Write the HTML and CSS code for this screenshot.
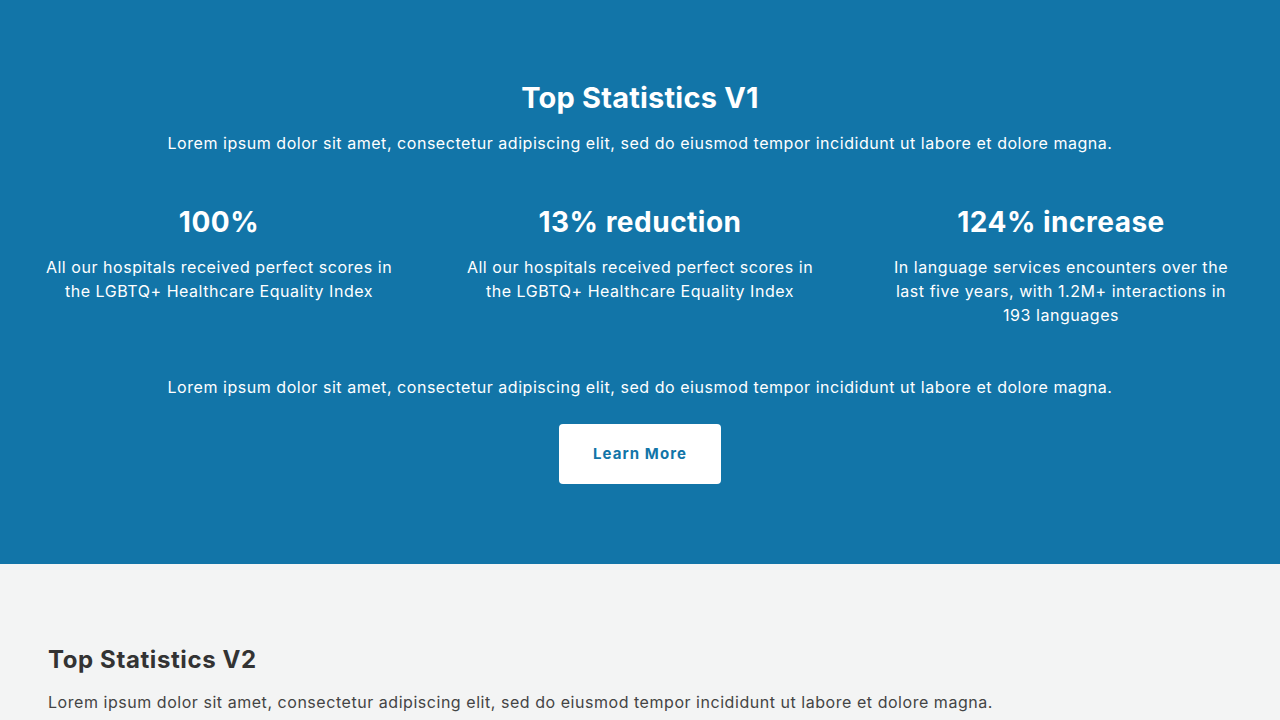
FILE: index.html
```html
<!DOCTYPE html>
<html lang="en">
<head>
<meta charset="utf-8">
<title>Top Statistics</title>
<link rel="stylesheet" href="styles.css">
</head>
<body>
<section class="stats stats-v1">
  <h2 class="stats-title">Top Statistics V1</h2>
  <p class="stats-lead">Lorem ipsum dolor sit amet, consectetur adipiscing elit, sed do eiusmod tempor incididunt ut labore et dolore magna.</p>
  <div class="stats-grid">
    <div class="stat">
      <div class="stat-value">100%</div>
      <p class="stat-text">All our hospitals received perfect scores in the LGBTQ+ Healthcare Equality Index</p>
    </div>
    <div class="stat">
      <div class="stat-value">13% reduction</div>
      <p class="stat-text">All our hospitals received perfect scores in the LGBTQ+ Healthcare Equality Index</p>
    </div>
    <div class="stat">
      <div class="stat-value">124% increase</div>
      <p class="stat-text">In language services encounters over the last five years, with 1.2M+ interactions in 193 languages</p>
    </div>
  </div>
  <p class="stats-foot">Lorem ipsum dolor sit amet, consectetur adipiscing elit, sed do eiusmod tempor incididunt ut labore et dolore magna.</p>
  <a class="btn" href="#">Learn More</a>
</section>
<section class="stats stats-v2">
  <h2 class="stats-title-v2">Top Statistics V2</h2>
  <p class="stats-lead-v2">Lorem ipsum dolor sit amet, consectetur adipiscing elit, sed do eiusmod tempor incididunt ut labore et dolore magna.</p>
</section>
</body>
</html>
```
FILE: styles.css
```css
* { box-sizing: border-box; }
html, body { margin: 0; padding: 0; }
body {
  font-family: "Inter", "DejaVu Sans", sans-serif;
  font-size: 16px;
  line-height: 24px;
}
p { margin: 0; }
h2 { margin: 0; }

.stats-v1 {
  background: #1275a8;
  color: #ffffff;
  padding: 80px 39px 80px;
  display: flex;
  flex-direction: column;
  align-items: center;
  text-align: center;
}
.stats-title {
  font-size: 29px;
  line-height: 36px;
  font-weight: 700;
  letter-spacing: 0.2px;
}
.stats-lead {
  margin-top: 15px;
  font-size: 16px;
  letter-spacing: 0.54px;
}
.stats-grid {
  margin-top: 50px;
  width: 100%;
  display: grid;
  grid-template-columns: repeat(3, 1fr);
  column-gap: 61px;
}
.stat-value {
  font-size: 28px;
  line-height: 34px;
  font-weight: 700;
  letter-spacing: 0.5px;
}
.stat-text {
  margin-top: 16px;
  letter-spacing: 0.54px;
}
.stats-foot {
  margin-top: 48px;
  letter-spacing: 0.54px;
}
.btn {
  margin-top: 25px;
  width: 162px;
  height: 60px;
  display: flex;
  align-items: center;
  justify-content: center;
  background: #ffffff;
  color: #1275a8;
  border-radius: 4px;
  font-size: 15px;
  font-weight: 700;
  text-decoration: none;
  letter-spacing: 1.1px;
}

.stats-v2 {
  background: #f3f4f4;
  color: #333333;
  padding: 81px 48px 80px;
}
.stats-title-v2 {
  font-size: 24px;
  line-height: 29px;
  font-weight: 700;
  color: #333333;
  letter-spacing: 0.6px;
}
.stats-lead-v2 {
  margin-top: 16px;
  color: #444444;
  letter-spacing: 0.54px;
}
```
